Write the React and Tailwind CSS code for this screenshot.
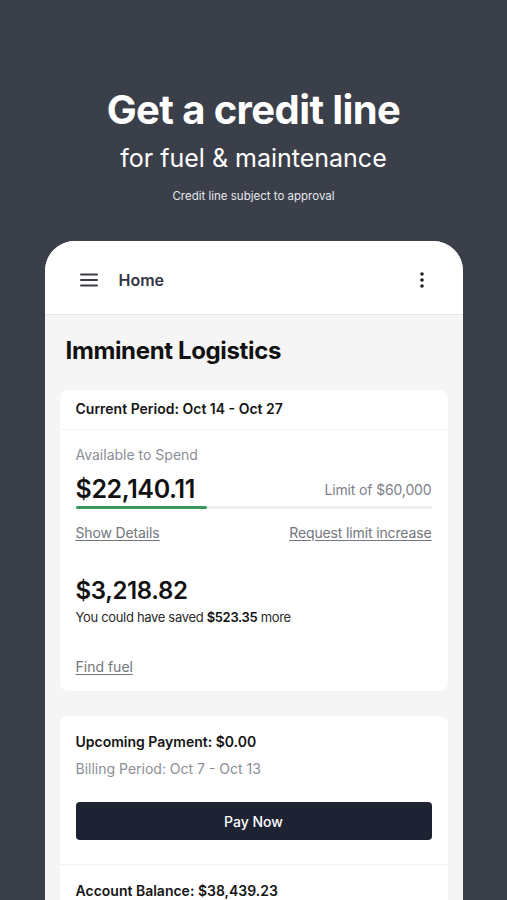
import React from 'react';

const App = () => {
  return (
    <div className="font-['Inter',sans-serif] h-[900px] overflow-hidden bg-[#3b3f4a] flex flex-col items-center">
      <header className="text-center text-white pt-[86px]">
        <h1 className="text-[40px] leading-[48px] font-bold tracking-[-0.015em]">Get a credit line</h1>
        <p className="text-[25px] leading-[32px] mt-[8px]">for fuel &amp; maintenance</p>
        <p className="text-[11.5px] leading-[16px] mt-[14px] text-gray-200">Credit line subject to approval</p>
      </header>

      <div className="mt-[37px] w-[418px] flex-1 rounded-t-[30px] bg-[#f5f5f5] overflow-hidden">
        <nav className="h-[74px] pt-[4px] bg-white border-b border-[#e6e6e6] flex items-center pl-[35px] pr-[38px]">
          <svg width="18" height="14" viewBox="0 0 18 14" className="text-[#3a3c48]">
            <path d="M1 1.5h16M1 7h16M1 12.5h16" stroke="currentColor" strokeWidth="2" strokeLinecap="round" />
          </svg>
          <span className="ml-[21px] text-[16px] font-semibold text-[#333543]">Home</span>
          <svg width="6" height="18" viewBox="0 0 6 18" className="ml-auto text-[#222]">
            <circle cx="3" cy="3" r="1.8" fill="currentColor" />
            <circle cx="3" cy="9" r="1.8" fill="currentColor" />
            <circle cx="3" cy="15" r="1.8" fill="currentColor" />
          </svg>
        </nav>

        <main className="px-[15px]">
          <h2 className="pl-[6px] pt-[20px] text-[24px] leading-[32px] font-bold text-[#111] tracking-[-0.015em]">Imminent Logistics</h2>

          <section className="mt-[23px] bg-white rounded-[8px]">
            <div className="px-4 pt-[9px] pb-[10px] border-b border-[#f2f2f2] text-[14px] leading-[20px] font-semibold text-[#151515]">
              Current Period: Oct 14 - Oct 27
            </div>
            <div className="px-4 pt-[15px] pb-[14px]">
              <p className="text-[14px] leading-[20px] text-[#8a8e96]">Available to Spend</p>
              <div className="mt-[8px] flex items-center justify-between">
                <span className="text-[25px] leading-[32px] font-semibold text-[#111] tracking-[-0.015em]">$22,140.11</span>
                <span className="text-[14px] text-[#7d8189] tracking-[-0.01em]">Limit of $60,000</span>
              </div>
              <div className="mt-[1px] h-[3px] bg-[#eef0f1] rounded-full">
                <div className="h-full w-[37%] bg-[#3a9a5c] rounded-full" />
              </div>
              <div className="mt-[14px] flex justify-between text-[14px] leading-[20px] text-[#72767e] underline underline-offset-2 tracking-[-0.01em]">
                <a>Show Details</a>
                <a>Request limit increase</a>
              </div>
              <p className="mt-[32px] text-[24px] leading-[32px] font-semibold text-[#111] tracking-[-0.015em]">$3,218.82</p>
              <p className="text-[13px] leading-[20px] text-[#2a2a2a] tracking-[-0.025em]">
                You could have saved <span className="font-semibold text-[#111]">$523.35</span> more
              </p>
              <a className="block mt-[30px] text-[14px] leading-[20px] text-[#72767e] underline underline-offset-2">Find fuel</a>
            </div>
          </section>

          <section className="mt-[25px] bg-white rounded-[8px]">
            <div className="px-4 pt-[16px] pb-[24px] border-b border-[#f2f2f2]">
              <p className="text-[14px] leading-[20px] font-semibold text-[#151515]">Upcoming Payment: $0.00</p>
              <p className="mt-[7px] text-[14px] leading-[20px] text-[#8a8e96]">Billing Period: Oct 7 - Oct 13</p>
              <button className="mt-[23px] w-full h-[38px] rounded-[4px] bg-[#1e2333] text-white text-[14px] font-medium">Pay Now</button>
            </div>
            <div className="px-4 pt-[16px] pb-4">
              <p className="text-[14px] leading-[20px] font-semibold text-[#151515]">Account Balance: $38,439.23</p>
            </div>
          </section>
        </main>
      </div>
    </div>
  );
};

export default App;
